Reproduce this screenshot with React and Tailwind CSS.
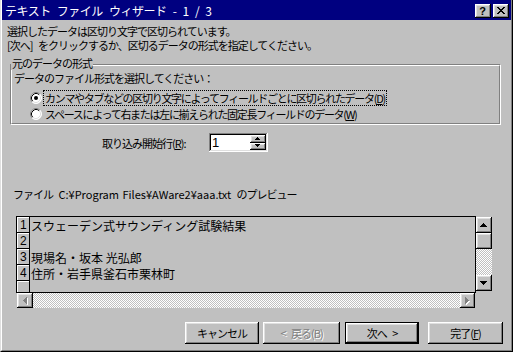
const RAISED =
  "shadow-[inset_-1px_-1px_0_#000,inset_1px_1px_0_#fff,inset_-2px_-2px_0_#808080,inset_2px_2px_0_#dfdfdf]";
const SUNKEN =
  "shadow-[inset_-1px_-1px_0_#fff,inset_1px_1px_0_#808080,inset_-2px_-2px_0_#dfdfdf,inset_2px_2px_0_#000]";
const DITHER =
  "bg-[image:repeating-conic-gradient(#fff_0_25%,#c0c0c0_0_50%)] bg-[length:2px_2px]";

function Radio({ checked }) {
  return (
    <svg width="12" height="12" viewBox="0 0 12 12" className="shrink-0">
      <circle cx="6" cy="6" r="5.5" fill="#fff" />
      <path d="M2.11 9.89 A5.5 5.5 0 0 1 9.89 2.11" fill="none" stroke="#808080" strokeWidth="1" />
      <path d="M9.89 2.11 A5.5 5.5 0 0 1 2.11 9.89" fill="none" stroke="#fff" strokeWidth="1" />
      <path d="M2.82 9.18 A4.5 4.5 0 0 1 9.18 2.82" fill="none" stroke="#000" strokeWidth="1" />
      <path d="M9.18 2.82 A4.5 4.5 0 0 1 2.82 9.18" fill="none" stroke="#dfdfdf" strokeWidth="1" />
      {checked && <circle cx="6" cy="6" r="2" fill="#000" />}
    </svg>
  );
}

function Arrow({ d, w, h, disabled }) {
  return (
    <svg width={w + 1} height={h + 1} viewBox={`0 0 ${w + 1} ${h + 1}`} shapeRendering="crispEdges">
      {disabled ? (
        <>
          <path d={d} fill="#fff" transform="translate(1 1)" />
          <path d={d} fill="#808080" />
        </>
      ) : (
        <path d={d} fill="#000" />
      )}
    </svg>
  );
}

const UP = "M3 0h1v1h1v1h1v1h1v1H0V3h1V2h1V1h1z";
const DOWN = "M0 0h7v1h-1v1h-1v1h-1v1h-1V3H2V2H1V1H0z";
const LEFT = "M3 0h1v7h-1v-1h-1v-1h-1v-1H0V3h1V2h1V1h1z";
const RIGHT = "M0 0h1v1h1v1h1v1h1v1H3v1H2v1H1v1H0z";
const SUP = "M2 0h1v1h1v1h1v1H0V2h1V1h1z";
const SDOWN = "M0 0h5v1H4v1H3v1H2V2H1V1H0z";

function XGlyph() {
  const rows = ["XX....XX", ".XX..XX.", "..XXXX..", "...XX...", "..XXXX..", ".XX..XX.", "XX....XX"];
  const rects = [];
  rows.forEach((r, y) =>
    r.split("").forEach((c, x) => {
      if (c === "X") rects.push(<rect key={`${x}-${y}`} x={x} y={y} width="1" height="1" fill="#000" />);
    })
  );
  return (
    <svg width="8" height="7" viewBox="0 0 8 7" shapeRendering="crispEdges">
      {rects}
    </svg>
  );
}

function Row({ n, text }) {
  return (
    <div className="flex h-[16px] shrink-0">
      <div className="w-[13px] h-full border-r border-b border-black shadow-[inset_1px_1px_0_#fff] flex items-end pl-[3px]">
        <span className="text-[12px] leading-[13px] tracking-normal font-['Liberation_Sans',sans-serif]">{n}</span>
      </div>
      <div className="flex items-end pl-px">
        <span className="text-[12px] leading-[14px] tracking-normal [word-spacing:0px] whitespace-nowrap">{text}</span>
      </div>
    </div>
  );
}

function Btn({ children, className = "", disabled, def }) {
  return (
    <div
      className={`h-[22px] flex items-center justify-center bg-[#c0c0c0] ${def ? "border border-black" : ""} ${className}`}
    >
      <div
        className={`w-full h-full flex items-center justify-center ${RAISED} ${
          disabled ? "text-[#808080] [text-shadow:1px_1px_0_#fff]" : ""
        }`}
      >
        {children}
      </div>
    </div>
  );
}

export default function App() {
  return (
    <div className="w-[513px] h-[352px] bg-[#c0c0c0] border-l border-r border-b border-l-[#dfdfdf] border-r-black border-b-black font-['Noto_Sans_CJK_JP',sans-serif] text-[11px] tracking-[-1px] [word-spacing:4px] text-black overflow-hidden select-none">
      <div className="h-full flex flex-col border-l border-r border-b border-l-white border-r-[#808080] border-b-[#808080]">
        {/* Title bar */}
        <div className="h-[20px] shrink-0 bg-[#000080] flex items-start justify-between pl-[3px] pr-[2px]">
          <span className="text-white text-[12px] tracking-[-0.5px] leading-[20px] pt-px whitespace-nowrap">
            テキスト ファイル ウィザード - 1 / 3
          </span>
          <div className="flex gap-[2px] pt-[4px]">
            <div className={`w-[16px] h-[14px] bg-[#c0c0c0] ${RAISED} flex items-center justify-center`}>
              <span className="font-['Liberation_Sans',sans-serif] font-bold text-[11px] leading-none tracking-normal pr-px">?</span>
            </div>
            <div className={`w-[16px] h-[14px] bg-[#c0c0c0] ${RAISED} flex items-center justify-center pb-px`}>
              <XGlyph />
            </div>
          </div>
        </div>

        {/* Body */}
        <div className="flex-1 flex flex-col pl-[5px]">
          <div className="mt-[4px] leading-[14px] whitespace-nowrap">選択したデータは区切り文字で区切られています。</div>
          <div className="leading-[14px] whitespace-nowrap">[次へ] をクリックするか、区切るデータの形式を指定してください。</div>

          {/* Group box */}
          <div className="relative mt-[4px] ml-[3px] w-[491px] pt-[8px]">
            <span className="absolute left-px top-0 px-px bg-[#c0c0c0] leading-[14px]">元のデータの形式</span>
            <div className="border border-t-[#808080] border-l-[#808080] border-r-white border-b-white">
              <div className="border border-t-white border-l-white border-r-[#808080] border-b-[#808080] pl-[2px] pt-[5px] pb-[1px]">
                <div className="leading-[14px] whitespace-nowrap">データのファイル形式を選択してください：</div>
                <div className="mt-[5px] flex items-center h-[16px] pl-[16px]">
                  <Radio checked />
                  <span className="ml-[1px] border border-dotted border-black px-px leading-[14px] tracking-[-1.3px] whitespace-nowrap">
                    カンマやタブなどの区切り文字によってフィールドごとに区切られたデータ(<span className="underline">D</span>)
                  </span>
                </div>
                <div className="flex items-center h-[16px] pl-[16px]">
                  <Radio />
                  <span className="ml-[1px] border border-transparent px-px leading-[14px] tracking-[-1.3px] whitespace-nowrap">
                    スペースによって右または左に揃えられた固定長フィールドのデータ(<span className="underline">W</span>)
                  </span>
                </div>
              </div>
            </div>
          </div>

          {/* Start row */}
          <div className="mt-[8px] ml-[95px] flex items-center h-[19px]">
            <span className="w-[107px] leading-[14px] whitespace-nowrap">
              取り込み開始行(<span className="underline">R</span>):
            </span>
            <div className={`w-[59px] h-[19px] bg-white ${SUNKEN} flex p-[2px]`}>
              <div className="flex-1 flex items-center pl-px">
                <span className="text-[13px] leading-none tracking-normal font-['Liberation_Sans',sans-serif]">1</span>
              </div>
              <div className="w-[16px] flex flex-col">
                <div className={`flex-1 bg-[#c0c0c0] ${RAISED} flex items-center justify-center`}>
                  <Arrow d={SUP} w={5} h={3} />
                </div>
                <div className={`flex-1 bg-[#c0c0c0] ${RAISED} flex items-center justify-center`}>
                  <Arrow d={SDOWN} w={5} h={3} />
                </div>
              </div>
            </div>
          </div>

          {/* Preview label */}
          <div className="mt-[35px] ml-[6px] leading-[14px] whitespace-nowrap">
            ファイル <span className="tracking-normal [word-spacing:1px]">C:¥Program Files¥AWare2¥aaa.txt</span> のプレビュー
          </div>

          {/* Preview */}
          <div className="mt-[15px] ml-[9px] flex">
            <div className="flex flex-col">
              <div className="w-[460px] h-[77px] border border-black flex flex-col overflow-hidden">
                <Row n="1" text="スウェーデン式サウンディング試験結果" />
                <Row n="2" text="" />
                <Row n="3" text="現場名・坂本 光弘郎" />
                <Row n="4" text="住所・岩手県釜石市栗林町" />
                <Row n="" text="" />
              </div>
              <div className={`ml-px w-[458px] h-[15px] flex ${DITHER}`}>
                <div className={`w-[16px] h-full bg-[#c0c0c0] ${RAISED} flex items-center justify-center`}>
                  <Arrow d={LEFT} w={4} h={7} disabled />
                </div>
                <div className="flex-1" />
                <div className={`w-[15px] h-full bg-[#c0c0c0] ${RAISED} flex items-center justify-center`}>
                  <Arrow d={RIGHT} w={4} h={7} disabled />
                </div>
              </div>
            </div>
            <div className={`mt-px w-[16px] h-[74px] flex flex-col ${DITHER}`}>
              <div className={`h-[16px] bg-[#c0c0c0] ${RAISED} flex items-center justify-center`}>
                <Arrow d={UP} w={7} h={4} />
              </div>
              <div className={`h-[16px] bg-[#c0c0c0] ${RAISED}`} />
              <div className="flex-1" />
              <div className={`h-[16px] bg-[#c0c0c0] ${RAISED} flex items-center justify-center`}>
                <Arrow d={DOWN} w={7} h={4} />
              </div>
            </div>
          </div>

          {/* Buttons */}
          <div className="mt-[14px] flex">
            <Btn className="ml-[178px] w-[74px]">キャンセル</Btn>
            <Btn className="ml-[4px] w-[77px]" disabled>
              &lt; 戻る(B)
            </Btn>
            <Btn className="ml-[5px] w-[74px]" def>
              次へ &gt;
            </Btn>
            <Btn className="ml-[9px] w-[75px]">
              完了(<span className="underline">F</span>)
            </Btn>
          </div>
        </div>
      </div>
    </div>
  );
}
